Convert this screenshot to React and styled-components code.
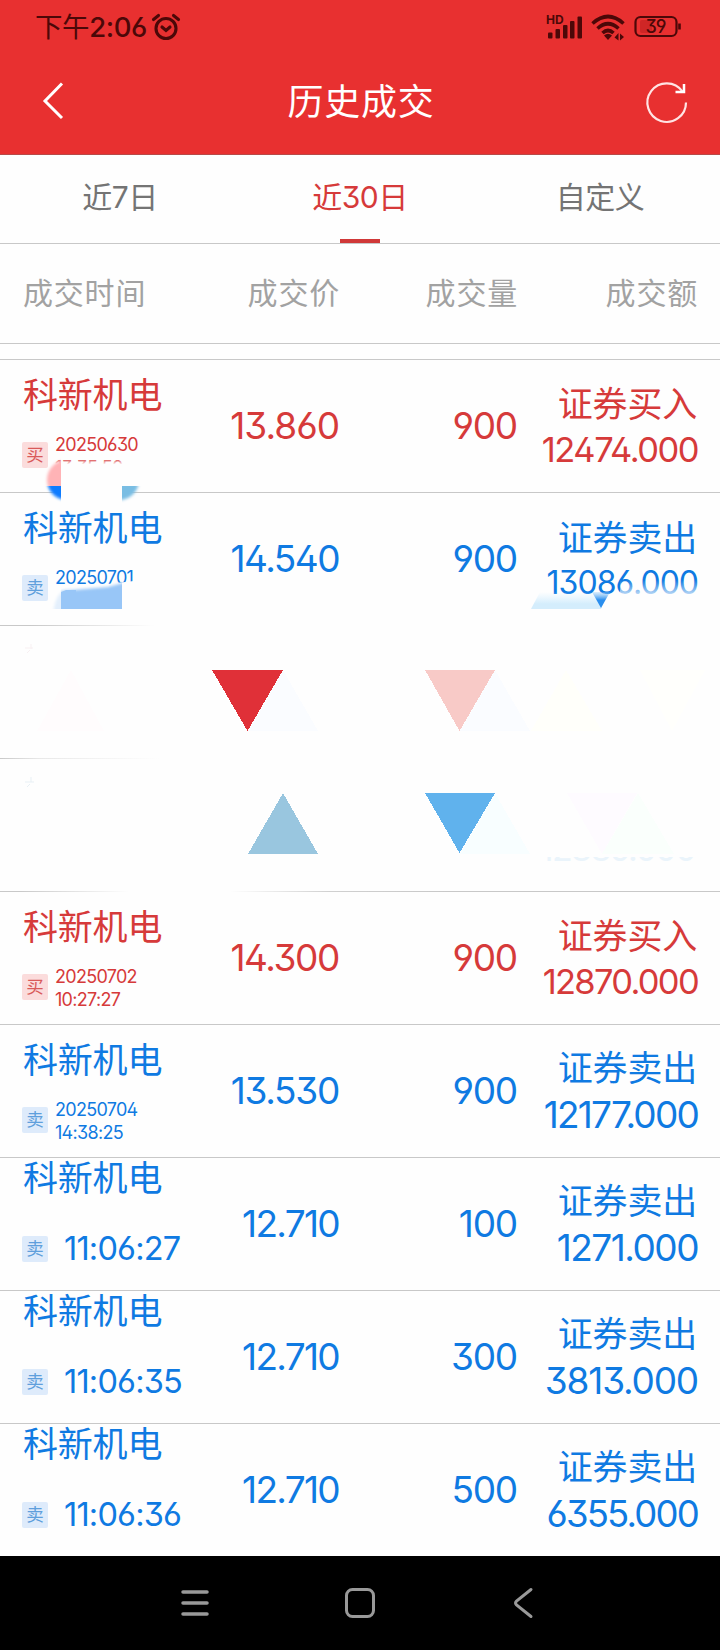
import React from 'react';
import styled, { createGlobalStyle } from 'styled-components';

const RED = '#d63a3a';
const BLUE = '#0f7ae2';

const GlobalStyle = createGlobalStyle`
    * { box-sizing: border-box; }
    body {
        margin: 0;
        background: #fefefe;
        font-family: Inter, "Noto Sans CJK SC", sans-serif;
        font-feature-settings: "ss01" 1;
    }
`;

const Screen = styled.div`
    width: 720px;
    height: 1650px;
    display: flex;
    flex-direction: column;
    overflow: hidden;
`;

const Header = styled.header`
    height: 155px;
    flex: none;
    background: #e83030;
    border-bottom: 1px solid #b84a48;
`;

const StatusBar = styled.div`
    height: 54px;
    padding: 0 38px 0 35px;
    display: flex;
    align-items: center;
    justify-content: space-between;
    color: #4c0808;
`;

const StatusSide = styled.div`
    display: flex;
    align-items: center;
    gap: ${({ $gap }) => $gap}px;
`;

const Clock = styled.span`
    font-size: 27.5px;
    line-height: 36px;
    font-weight: 500;
    letter-spacing: -0.4px;
`;

const DayPart = styled.span`
    font-weight: 400;
`;

const TitleBar = styled.div`
    height: 96px;
    padding: 0 28px 0 40px;
    display: grid;
    grid-template-columns: 44px 1fr 44px;
    align-items: center;
`;

const Title = styled.h1`
    margin: 0 10px 0 0;
    color: #fff;
    text-align: center;
    font-size: 36px;
    line-height: 50px;
    font-weight: 400;
    letter-spacing: 0.8px;
`;

const Tabs = styled.nav`
    height: 89px;
    flex: none;
    display: grid;
    grid-template-columns: repeat(3, 1fr);
    border-bottom: 1px solid #c8c8c8;
`;

const Tab = styled.div`
    display: flex;
    flex-direction: column;
    align-items: center;
    justify-content: space-between;
    padding-top: 20px;
    font-size: 30px;
    line-height: 44px;
    letter-spacing: -0.5px;
    color: ${({ $active }) => ($active ? RED : '#747474')};

    &::after {
        content: '';
        width: 40px;
        height: 4px;
        background: ${({ $active }) => ($active ? '#d03838' : 'transparent')};
    }
`;

const Columns = styled.div`
    display: grid;
    grid-template-columns: 200px 116px 178px 180px;
    padding: 0 23px;
    text-align: right;
`;

const TableHead = styled(Columns)`
    height: 100px;
    flex: none;
    align-items: center;
    padding-bottom: 6px;
    border-bottom: 1px solid #c8c8c8;
    color: #a2a2a2;
    font-size: 30px;
    letter-spacing: 0.8px;

    span {
        margin-right: -1px;
    }

    span:first-child {
        text-align: left;
    }
`;

const List = styled.div`
    margin-top: 15px;
    border-top: 1px solid #c8c8c8;
    position: relative;
`;

const Row = styled(Columns)`
    height: ${({ $last }) => ($last ? 132 : 133)}px;
    color: ${({ $side }) => ($side === '买' ? RED : BLUE)};
    border-bottom: 1px solid ${({ $last }) => ($last ? 'transparent' : '#c8c8c8')};
`;

const FadedRow = styled.div`
    height: 133px;
    border-bottom: 1px solid;
    border-image: ${({ $line }) => $line} 1;
`;

const Stock = styled.div`
    text-align: left;
    padding-top: ${({ $short }) => ($short ? 0 : 15)}px;
`;

const StockName = styled.div`
    font-size: 35px;
    line-height: 40px;
    letter-spacing: -0.2px;
    white-space: nowrap;
`;

const StockMeta = styled.div`
    display: flex;
    align-items: ${({ $short }) => ($short ? 'center' : 'flex-start')};
    gap: ${({ $short }) => ($short ? 16 : 7)}px;
    margin: ${({ $short }) => ($short ? 31 : 18)}px 0 0 -1px;
`;

const Badge = styled.span`
    width: 26px;
    height: 26px;
    flex: none;
    margin-top: ${({ $short }) => ($short ? 0 : 9)}px;
    border-radius: 2px;
    text-align: center;
    font-size: 17.5px;
    line-height: 26px;
    color: ${({ $side }) => ($side === '买' ? '#d95a5a' : '#5f9fdc')};
    background: ${({ $side }) => ($side === '买' ? '#fbdcdc' : '#deebfb')};
`;

const Stamp = styled.span`
    font-size: ${({ $short }) => ($short ? 32.5 : 18)}px;
    line-height: ${({ $short }) => ($short ? 40 : 23)}px;
    letter-spacing: ${({ $short }) => ($short ? -0.8 : -0.7)}px;
    white-space: pre-line;
`;

const Figure = styled.div`
    font-size: 37px;
    line-height: 44px;
    letter-spacing: ${({ $tracking = -1.2 }) => $tracking}px;
    padding-top: 44px;
`;

const Amount = styled.div`
    padding-top: ${({ $size }) => 22 + (37 - $size) / 3}px;
    white-space: nowrap;
`;

const AmountKind = styled.div`
    font-size: 35px;
    line-height: 42px;
    letter-spacing: -0.2px;
`;

const AmountValue = styled.div`
    font-size: ${({ $size }) => $size}px;
    line-height: 46px;
    letter-spacing: ${({ $tracking }) => $tracking}px;
    margin: ${({ $size }) => 3 - (37 - $size) / 3}px -1px 0 0;
`;

// shapes drawn over the list
const Overlay = styled.svg`
    position: absolute;
    left: 0;
    top: 0;
    pointer-events: none;
`;

const SystemNav = styled.footer`
    height: 94px;
    margin-top: auto;
    flex: none;
    background: #000;
    display: flex;
    align-items: center;
    justify-content: center;
    gap: 132px;
`;

const trades = [
    { side: '买', stamp: '20250630\n13:35:50', price: '13.860', tracking: -1, volume: '900', amount: '12474.000', size: 34.5, amountTracking: -1.5 },
    { side: '卖', stamp: '20250701\n09:35:50', price: '14.540', tracking: -1.5, volume: '900', amount: '13086.000', size: 32, amountTracking: -1 },
    { line: 'linear-gradient(to right, #c8c8c8 0, #e8e8e8 40px, #fefefe 160px)' },
    { line: 'linear-gradient(to right, #c8c8c8 20px, #fefefe 130px, #fefefe 230px, #d0d0d0 330px, #c8c8c8 450px)' },
    { side: '买', stamp: '20250702\n10:27:27', price: '14.300', tracking: -1.4, volume: '900', amount: '12870.000', size: 34.5, amountTracking: -1.7 },
    { side: '卖', stamp: '20250704\n14:38:25', price: '13.530', tracking: -1.3, volume: '900', amount: '12177.000', size: 37, amountTracking: -1.8 },
    { side: '卖', stamp: '11:06:27', short: true, price: '12.710', tracking: -1.7, volume: '100', amount: '1271.000', size: 37, amountTracking: -1.5 },
    { side: '卖', stamp: '11:06:35', short: true, price: '12.710', tracking: -1.7, volume: '300', amount: '3813.000', size: 37, amountTracking: -1.2 },
    { side: '卖', stamp: '11:06:36', short: true, price: '12.710', tracking: -1.7, volume: '500', amount: '6355.000', size: 36.5, amountTracking: -1.8 },
];

const AlarmIcon = () => (
    <svg width="30" height="28" viewBox="0 0 30 28" fill="none" stroke="currentColor" strokeWidth="3.1" strokeLinecap="round">
        <circle cx="15" cy="15.5" r="10" />
        <path d="M11 14l4 3.5 4-3.5M2.5 6.5l5-4M27.5 6.5l-5-4" />
    </svg>
);

const HdText = styled.text`
    font-size: 12px;
    font-weight: 700;
`;

const BatteryText = styled.text`
    font-size: 18px;
    font-weight: 500;
    letter-spacing: -1px;
`;

const FaintText = styled.text`
    font-size: 34px;
    letter-spacing: -1.6px;
`;

const SignalIcon = () => (
    <svg width="38" height="28" viewBox="0 0 38 28" fill="currentColor">
        <HdText x="0" y="10.5">HD</HdText>
        <rect x="2" y="19.5" width="4.5" height="6" rx="1" />
        <rect x="9.5" y="16" width="4.5" height="9.5" rx="1" />
        <rect x="17" y="12" width="4.5" height="13.5" rx="1" />
        <rect x="24" y="8" width="4.5" height="17.5" rx="1" />
        <rect x="31.5" y="3.5" width="4.5" height="22" rx="1" />
    </svg>
);

const WifiIcon = () => (
    <svg width="36" height="28" viewBox="0 0 36 28" fill="none" stroke="currentColor" strokeWidth="3.6">
        <path d="M1.5 10.5q15.5-14 31 0" />
        <path d="M6.5 15.5q10.5-9.5 21 0" />
        <path d="M11.5 20q5.5-5 11 0" />
        <path d="M13 22.500q4-3.500 8 0l-4 4.500z" fill="currentColor" stroke="none" />
        <path d="M27.500 20v7.500l-4-3zM29 27.500v-7l4 3.500z" fill="currentColor" stroke="none" />
    </svg>
);

const BatteryIcon = () => (
    <svg width="48" height="24" viewBox="0 0 48 24" fill="none">
        <rect x="1.5" y="2" width="41" height="19" rx="5" stroke="currentColor" strokeWidth="2.2" />
        <rect x="6" y="5" width="12" height="13" rx="2" fill="#cf2626" />
        <path d="M45.5 8.5v6" stroke="currentColor" strokeWidth="2.6" />
        <BatteryText x="21.5" y="18" textAnchor="middle" fill="currentColor">39</BatteryText>
    </svg>
);

const Trade = ({ trade, last }) => (
    <Row $side={trade.side} $last={last}>
        <Stock $short={trade.short}>
            <StockName>科新机电</StockName>
            <StockMeta $short={trade.short}>
                <Badge $side={trade.side} $short={trade.short}>{trade.side}</Badge>
                <Stamp $short={trade.short}>{trade.stamp}</Stamp>
            </StockMeta>
        </Stock>
        <Figure $tracking={trade.tracking}>{trade.price}</Figure>
        <Figure>{trade.volume}</Figure>
        <Amount $size={trade.size}>
            <AmountKind>{trade.side === '买' ? '证券买入' : '证券卖出'}</AmountKind>
            <AmountValue $size={trade.size} $tracking={trade.amountTracking}>{trade.amount}</AmountValue>
        </Amount>
    </Row>
);

const Shapes = () => (
    <Overlay width="720" height="560" viewBox="0 360 720 560">
        <defs>
            <filter id="soft" x="-20%" y="-20%" width="140%" height="140%">
                <feGaussianBlur stdDeviation="1.5" />
            </filter>
            <linearGradient id="fade" x1="0" y1="0" x2="0" y2="1">
                <stop offset="0" stopColor="#fefefe" stopOpacity="0.2" />
                <stop offset="0.25" stopColor="#fefefe" />
            </linearGradient>
            <linearGradient id="lineFade" x1="0" y1="0" x2="1" y2="0">
                <stop offset="0" stopColor="#fefefe" stopOpacity="0" />
                <stop offset="0.18" stopColor="#fefefe" />
            </linearGradient>
            <linearGradient id="amountFade" x1="0" y1="0" x2="0" y2="1">
                <stop offset="0" stopColor="#fefefe" stopOpacity="0" />
                <stop offset="1" stopColor="#fefefe" stopOpacity="0.8" />
            </linearGradient>
            <linearGradient id="pale" x1="0" y1="0" x2="0" y2="1">
                <stop offset="0" stopColor="#d8f0ff" stopOpacity="0" />
                <stop offset="0.7" stopColor="#d4edfc" />
            </linearGradient>
            <linearGradient id="tip" x1="0" y1="0" x2="0" y2="1">
                <stop offset="0" stopColor="#8fc6f5" stopOpacity="0.3" />
                <stop offset="0.5" stopColor="#2a8eee" />
            </linearGradient>
            <clipPath id="leftTop"><rect x="40" y="450" width="21" height="36" /></clipPath>
            <clipPath id="leftLow"><rect x="40" y="486" width="21" height="20" /></clipPath>
            <clipPath id="rightLow"><rect x="122" y="486" width="24" height="20" /></clipPath>
            <clipPath id="paleBox"><rect x="50" y="570" width="72" height="39" /></clipPath>
            <clipPath id="amountFoot"><rect x="540" y="857" width="170" height="10" /></clipPath>
        </defs>
        {/* first trade: time cut off by the round mark */}
        <rect x="54" y="460" width="90" height="18" fill="url(#fade)" />
        <rect x="61" y="468" width="61" height="35" fill="#fefefe" />
        <g clipPath="url(#leftTop)">
            <circle cx="67" cy="480" r="20" fill="#ffb3b6" filter="url(#soft)" />
        </g>
        <g clipPath="url(#leftLow)">
            <circle cx="67" cy="480" r="20" fill="#0a7bff" filter="url(#soft)" />
        </g>
        <g clipPath="url(#rightLow)">
            <circle cx="119" cy="480" r="20" fill="#79bde3" filter="url(#soft)" />
        </g>
        {/* second trade: time under the blue band */}
        <path d="M54 590L134 581V612H54z" fill="#fefefe" />
        <g clipPath="url(#paleBox)">
            <path d="M61 620V591L108 587 130 581V620z" fill="#98c6f7" filter="url(#soft)" />
            <rect x="50" y="586" width="11" height="24" fill="#fefefe" />
            <path d="M53 615Q55 590 70 589V625z" fill="#e3effc" filter="url(#soft)" />
            <path d="M61 609V592L66 590H76V609z" fill="#98c6f7" />
        </g>
        <rect x="620" y="580" width="80" height="16" fill="url(#amountFade)" />
        <path d="M540 592H608L601 609H531z" fill="url(#pale)" />
        <path d="M592 592H610L601 608z" fill="url(#tip)" />
        <rect x="30" y="625" width="690" height="1" fill="url(#lineFade)" />
        <path d="M25 648h8M31 644v5M27 653l3-3" stroke="#f8f0f2" />
        <path d="M25 782h9M31 777v5M27 787l3-3" stroke="#e8f0f5" />
        <g shapeRendering="crispEdges">
            <path d="M71 670L104 731H37z" fill="#fffcfd" />
            <path d="M283 670L318 731H248z" fill="#fafcff" />
            <path d="M495 670L530 731H460z" fill="#fafcff" />
            <path d="M566 670L602 731H531z" fill="#fffffa" />
            <path d="M640 670H705L672 731z" fill="#fffffc" />
            <path d="M212 670H283L247.5 731z" fill="#e03038" />
            <path d="M425 670H495L459.5 731z" fill="#f8cac7" />
            <path d="M283 793L318 854H248z" fill="#99c6df" />
            <path d="M495 793L530 854H460z" fill="#f8feff" />
            <path d="M567 793H637L602 854z" fill="#fefbff" />
            <path d="M638 793L674 854H602z" fill="#fafffc" />
            <path d="M425 793H495L459.5 853z" fill="#60b2ed" />
        </g>
        <g clipPath="url(#amountFoot)">
            <FaintText x="695" y="860.5" textAnchor="end" fill="#eaf4fb">12886.000</FaintText>
        </g>
    </Overlay>
);

export default function App() {
    return (
        <Screen>
            <GlobalStyle />
            <Header>
                <StatusBar>
                    <StatusSide $gap={4}>
                        <Clock><DayPart>下午</DayPart>2:06</Clock>
                        <AlarmIcon />
                    </StatusSide>
                    <StatusSide $gap={7}>
                        <SignalIcon />
                        <WifiIcon />
                        <BatteryIcon />
                    </StatusSide>
                </StatusBar>
                <TitleBar>
                    <svg width="44" height="44" viewBox="0 0 44 44" fill="none" stroke="#fff" strokeWidth="3">
                        <path d="M22 3.500L5 21 22 38" />
                    </svg>
                    <Title>历史成交</Title>
                    <svg width="44" height="44" viewBox="0 0 44 44" fill="none" stroke="#ffe4e4" strokeWidth="2.2" overflow="visible">
                        <path d="M38 22.500A19.300 19.300 0 1 1 34.500 11.500" />
                        <path d="M36 4V12H27.500" stroke="#fff" strokeWidth="2.5" />
                    </svg>
                </TitleBar>
            </Header>
            <Tabs>
                <Tab>近7日</Tab>
                <Tab $active>近30日</Tab>
                <Tab>自定义</Tab>
            </Tabs>
            <TableHead>
                <span>成交时间</span>
                <span>成交价</span>
                <span>成交量</span>
                <span>成交额</span>
            </TableHead>
            <List>
                {trades.map((trade, i) => trade.side
                    ? <Trade key={i} trade={trade} last={i === trades.length - 1} />
                    : <FadedRow key={i} $line={trade.line} />
                )}
                <Shapes />
            </List>
            <SystemNav>
                <svg width="32" height="32" viewBox="0 0 32 32" stroke="#999" strokeWidth="3.5" strokeLinecap="round">
                    <path d="M3 5h24M3 16h24M3 27h24" />
                </svg>
                <svg width="32" height="32" viewBox="0 0 32 32" fill="none" stroke="#999" strokeWidth="3">
                    <rect x="2.500" y="2.500" width="27" height="27" rx="6" />
                </svg>
                <svg width="32" height="32" viewBox="0 0 32 32" fill="none" stroke="#999" strokeWidth="3" strokeLinecap="round">
                    <path d="M23 2.500L8.500 14q-2 2 0 4L23 29.500" />
                </svg>
            </SystemNav>
        </Screen>
    );
}
